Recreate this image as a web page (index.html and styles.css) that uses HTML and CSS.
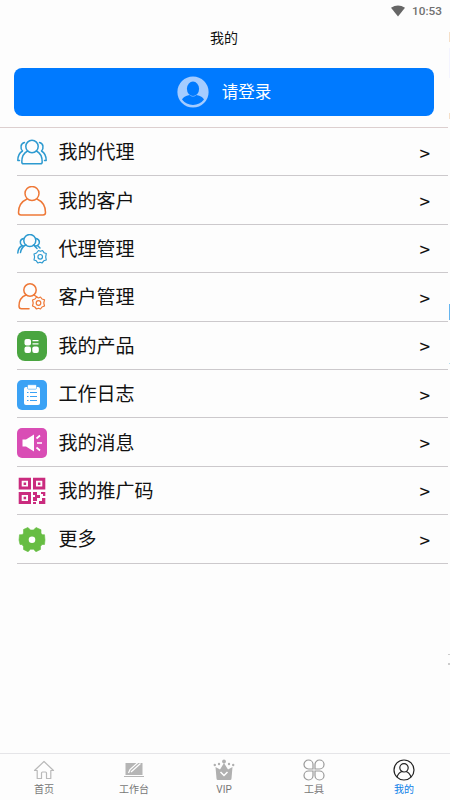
FILE: index.html
```html
<!DOCTYPE html>
<html lang="zh-CN">
<head>
<meta charset="utf-8">
<title>我的</title>
<link rel="stylesheet" href="styles.css">
</head>
<body>
<div class="screen">
  <div class="status">
    <svg width="16" height="12" viewBox="0 0 16 12"><path d="M1 2.8Q8-2 15 2.8L8 11.5Z" fill="#666"/></svg>
    <span>10:53</span>
  </div>
  <header class="title">我的</header>
  <div class="login">
    <svg width="32" height="32" viewBox="0 0 32 32"><circle cx="16" cy="16" r="15.6" fill="#a5ccff"/><path d="M5 23.5Q6.5 20 12.5 19Q16 22 19.5 19Q25.5 20 27 23.5A13.8 13.8 0 0 1 5 23.5Z" fill="#007aff"/><ellipse cx="16" cy="12.8" rx="6.1" ry="7.2" fill="#007aff"/></svg>
    <span class="login-text">请登录</span>
  </div>
  <ul class="menu">
    <li><svg class="icon line blue" viewBox="0 0 30 30"><circle cx="15" cy="8.500" r="6.200"/><path d="M10.500 13C6.500 15 4.800 19 4.800 24Q4.800 25.800 6.500 25.800H23.500Q25.200 25.800 25.200 24C25.200 19 23.500 15 19.500 13M7.500 4.500C3.500 5.500 3 10 5.500 13C2 15 .8 18 .8 22.500H2.500M22.500 4.500C26.500 5.500 27 10 24.500 13C28 15 29.200 18 29.200 22.500H27.500"/></svg><span class="label">我的代理</span><span class="arrow">&gt;</span></li>
    <li><svg class="icon line orange" viewBox="0 0 30 30"><ellipse cx="15" cy="7.5" rx="7" ry="7"/><path d="M10 13C4.5 15.5 1.500 20 1.500 26.500Q1.500 29 4 29H26Q28.500 29 28.500 26.500C28.500 20 25.500 15.500 20 13"/></svg><span class="label">我的客户</span><span class="arrow">&gt;</span></li>
    <li><svg class="icon line blue" viewBox="0 0 30 30"><circle cx="12.800" cy="6.500" r="6"/><path d="M6.500 4.500C2.500 5.500 2.500 9.500 5 11.500C2.500 13 1 15.500.8 19M8.500 11C6 12.500 4 15.500 3.500 18.500M19 4.500C23.500 5.500 23 10 20.500 11.500L23 14M5 11.500Q7 12.500 9 11M20.500 11.500Q18.500 12.500 16.500 11L20 14.500"/><g class="gear"><path d="M21.500 16.500L23.500 17.300L25.500 16.500L27 18.700L29.300 19.500L28.700 23L29.300 26L26.800 26.800L25 29L23 28.200L20.800 29L19.300 26.800L17 26L17.600 23L17 20L19.500 19Z"/><circle cx="23.200" cy="22.800" r="2.300"/></g></svg><span class="label">代理管理</span><span class="arrow">&gt;</span></li>
    <li><svg class="icon line orange" viewBox="0 0 30 30"><circle cx="13" cy="7" r="6.200"/><path d="M9 12C4 14 2 18.500 2 23Q2 25.800 4.500 25.800H12M17 12L20 14"/><g class="gear"><path d="M19.500 14L21.500 15L23.500 14L25 16L27.500 16.800L26.800 20L27.500 23L25 24L23.500 26L21.500 25.200L19.500 26L17.800 24L15.500 23L16.200 20L15.500 17L18 16Z"/><circle cx="21.500" cy="20" r="2.300"/></g></svg><span class="label">客户管理</span><span class="arrow">&gt;</span></li>
    <li><svg class="icon" viewBox="0 0 30 30"><rect width="30" height="30" rx="8" fill="#4aa540"/><g fill="#fff"><rect x="7.500" y="8" width="6.500" height="6.500" rx="2"/><rect x="7.500" y="15.500" width="6.500" height="6.500" rx="2"/><rect x="15.300" y="15.500" width="6.500" height="6.500" rx="2"/><path d="M15.500 9H21.500V10.200H15.500ZM15.500 12.200H21.500V13.400H15.500Z"/></g></svg><span class="label">我的产品</span><span class="arrow">&gt;</span></li>
    <li><svg class="icon" viewBox="0 0 30 30"><rect width="30" height="30" rx="5" fill="#3ba2f5"/><rect x="7" y="7" width="16" height="18" rx="2" fill="#fff"/><rect x="10.500" y="4.700" width="9" height="4.500" rx="1" fill="#fff" stroke="#3ba2f5" stroke-width=".6"/><path d="M10 12.500H11.500M13 12.500H20M10 16.500H11.500M13 16.500H20M10 20.500H11.500M13 20.500H20" stroke="#3ba2f5" stroke-width="1.200"/></svg><span class="label">工作日志</span><span class="arrow">&gt;</span></li>
    <li><svg class="icon" viewBox="0 0 30 30"><rect width="30" height="30" rx="5" fill="#d94db5"/><path d="M5.500 11.500H9L17 6.500V23.500L9 18.500H5.500Z" fill="#fff"/><path d="M19.500 10.500L23 7.500M20 15H25M19.500 19.500L23 22.500" stroke="#fff" stroke-width="1.700"/></svg><span class="label">我的消息</span><span class="arrow">&gt;</span></li>
    <li><svg class="icon" viewBox="0 0 30 30"><path fill="none" stroke="#ca2b7e" stroke-width="3" d="M3.200 3.200H12.500V12H3.200ZM17.500 3.200H26.800V12H17.500ZM3.200 17.500H12.500V26.500H3.200Z"/><g fill="#ca2b7e"><path d="M6.600 6.400H9.100V8.900H6.600ZM20.900 6.400H23.400V8.900H20.900ZM6.600 20.700H9.100V23.200H6.600ZM16 16H20V19H23V22H20V25H16V21H18V19H16ZM24 16H28.300V20H26V18H24ZM25 22H28.300V28H22V25H25ZM16 26H19V28H16Z"/></g></svg><span class="label">我的推广码</span><span class="arrow">&gt;</span></li>
    <li><svg class="icon" viewBox="0 0 30 30"><path d="M8.500 3.500L11 2.500L13.500 5H16.500L19 2.500L24 4.700V8.200L25.500 9.700H27.500L28 15L27.500 19.500H25L23.500 21.500V24.500L19 26.700L16.500 24.300H13.500L11 26.700L6.500 24.500V21.500L5 19.500H3L2 15L2.500 9.700H5L6.500 8.200V4.500Z" fill="#67bd43" stroke="#67bd43" stroke-width=".6" stroke-linejoin="round"/><circle cx="15" cy="14.700" r="3.300" fill="#fff"/></svg><span class="label">更多</span><span class="arrow">&gt;</span></li>
  </ul>
  <nav class="tabs">
    <div class="tab"><svg class="tabicon" viewBox="0 0 22 22" fill="none" stroke="#b9b9b9" stroke-width="1.200"><path d="M1.500 11.500L11 2.500L20.500 11.500H17.800V19.500H13.500V14Q13.500 13 12.500 13H9.500Q8.500 13 8.500 14V19.500H4.200V11.500Z" stroke-linejoin="round"/></svg><span>首页</span></div>
    <div class="tab"><svg class="tabicon" viewBox="0 0 22 22"><path d="M2.500 4H19.500V16H2.500ZM1 17H21V18H1Z" fill="#b5b5b5"/><path d="M5.500 14L7 10.500L16 2.500M8 13L17.500 4.500" fill="none" stroke="#fff" stroke-width="1.200"/></svg><span>工作台</span></div>
    <div class="tab"><svg class="tabicon" viewBox="0 0 22 22"><path d="M2.500 8L7 10.500L11 4L15 10.500L19.500 8L18.500 19.500Q18.500 21 17 21H5Q3.500 21 3.500 19.500Z" fill="#b0b0b0"/><g fill="#b0b0b0"><circle cx="11" cy="2.500" r="1.900"/><circle cx="1.800" cy="6" r="1.200"/><circle cx="20.200" cy="6" r="1.200"/><circle cx="6" cy="5" r="1.200"/><circle cx="16" cy="5" r="1.200"/></g><path d="M7.500 13L11 16.500L14.500 13" fill="none" stroke="#fff" stroke-width="1.500"/></svg><span>VIP</span></div>
    <div class="tab"><svg class="tabicon" viewBox="0 0 22 22" fill="none" stroke="#999" stroke-width="1.200"><path d="M10 10H5.500A4.500 4.500 0 1 1 10 5.500ZM12 10V5.500A4.500 4.500 0 1 1 16.500 10ZM10 12V16.500A4.500 4.500 0 1 1 5.500 12ZM12 12H16.500A4.500 4.500 0 1 1 12 16.500Z"/></svg><span>工具</span></div>
    <div class="tab active"><svg class="tabicon" viewBox="0 0 22 22" fill="none" stroke="#222" stroke-width="1.200"><circle cx="11" cy="11" r="10"/><circle cx="11" cy="8.800" r="4.200"/><path d="M4 18Q5.500 13.500 9 12.500M13 12.500Q16.500 13.500 18 18"/></svg><span>我的</span></div>
  </nav>
  <svg class="edge" width="2" height="800" viewBox="0 0 2 800"><path d="M1 32H2V42H1ZM1 113H2V119H1Z" fill="#f5dfc8"/><path d="M1 48H2V78H1Z" fill="#f4f4ff"/><path d="M1 304H2V320H1Z" fill="#65b5ef"/><path d="M1 363H2V364H1Z" fill="#b6def0"/><path d="M0 654H2V655H0ZM0 663H2V665H0Z" fill="#ccc"/></svg>
</div>
</body>
</html>
```
FILE: styles.css
```css
* { box-sizing: border-box; }
body {
  margin: 0;
  background: #fdfdfd;
  font-family: Roboto, "Noto Sans CJK SC", sans-serif;
  color: #111;
}
svg { display: block; flex: none; }
.screen {
  position: relative;
  display: flex;
  flex-direction: column;
  width: 450px;
  height: 800px;
  overflow: hidden;
}
.status {
  display: flex;
  justify-content: flex-end;
  align-items: center;
  gap: 6px;
  height: 20px;
  padding: 1px 8px 0 0;
  font-size: 11.8px;
  font-weight: 500;
  color: #707070;
}
.title {
  height: 48px;
  padding-right: 2px;
  line-height: 37px;
  font-size: 14px;
  text-align: center;
}
.login {
  display: flex;
  align-items: center;
  justify-content: center;
  gap: 13px;
  flex: none;
  height: 47.5px;
  margin: 0 16px 0 14px;
  border-radius: 8px;
  background: #007aff;
  color: #fff;
  font-size: 16.5px;
}
.login-text { padding-bottom: 2px; }
.menu {
  width: 448px;
  margin: 11.5px 0 0;
  padding: 0;
  list-style: none;
  border-top: 1px solid #dccfcf;
}
.menu li {
  display: flex;
  align-items: center;
  height: 48.4px;
  margin-left: 16.5px;
  padding: 2px 18px 0 0;
  border-bottom: 1px solid #ccc9cc;
}
.icon { width: 30px; height: 30px; }
.line { fill: none; stroke-width: 1.5; stroke-linecap: round; stroke-linejoin: round; }
.blue { stroke: #2d9ad0; }
.orange { stroke: #ee7837; }
.gear { fill: #fdfdfd; stroke-width: 1.2; }
.label { flex: 1; margin-left: 12px; padding-top: 1px; font-size: 19px; line-height: 28px; }
.arrow { font-family: "Noto Sans CJK SC", sans-serif; font-size: 19px; line-height: 28px; }
.tabs {
  display: flex;
  width: 450px;
  height: 47px;
  margin-top: auto;
  border-top: 1px solid #e5e5e8;
}
.tab {
  display: flex;
  flex-direction: column;
  align-items: center;
  width: 90px;
  padding: 5px 2px 0 0;
  font-size: 10px;
  line-height: 17px;
  color: #777;
}
.tabicon { width: 22px; height: 22px; }
.active { color: #0e80e8; }
.edge { position: absolute; top: 0; right: 0; }
```
